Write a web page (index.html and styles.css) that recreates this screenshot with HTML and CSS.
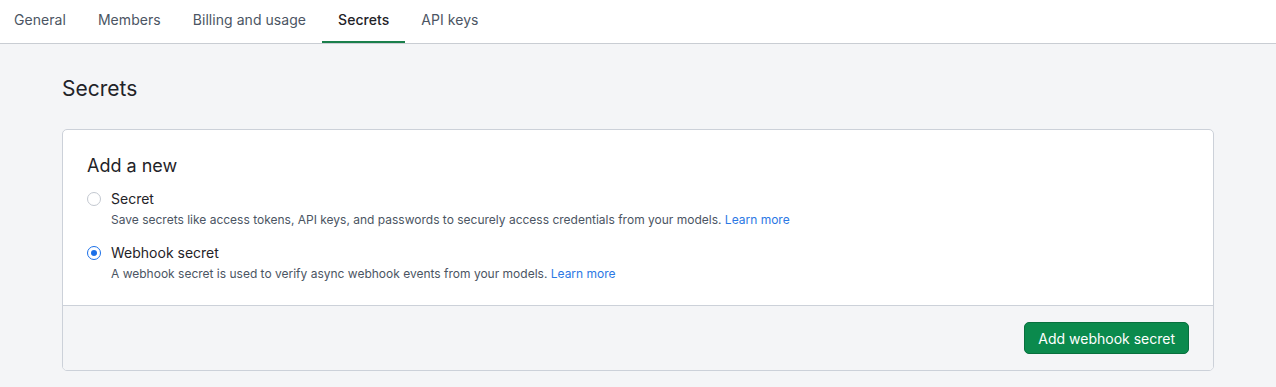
FILE: index.html
```html
<!DOCTYPE html>
<html lang="en">
<head>
<meta charset="utf-8">
<link rel="stylesheet" href="styles.css">
</head>
<body>
<nav class="tabs">
  <a class="tab first">General</a>
  <a class="tab">Members</a>
  <a class="tab">Billing and usage</a>
  <a class="tab active">Secrets</a>
  <a class="tab">API keys</a>
</nav>
<main class="page">
  <h1 class="title">Secrets</h1>
  <section class="card">
    <div class="card-body">
      <h2 class="card-title">Add a new</h2>
      <div class="option">
        <span class="radio"></span>
        <div class="option-text">
          <div class="option-label">Secret</div>
          <div class="option-desc">Save secrets like access tokens, API keys, and passwords to securely access credentials from your models. <a class="link">Learn more</a></div>
        </div>
      </div>
      <div class="option">
        <span class="radio checked"></span>
        <div class="option-text">
          <div class="option-label">Webhook secret</div>
          <div class="option-desc">A webhook secret is used to verify async webhook events from your models. <a class="link">Learn more</a></div>
        </div>
      </div>
    </div>
    <div class="card-footer">
      <button class="btn">Add webhook secret</button>
    </div>
  </section>
</main>
</body>
</html>
```

FILE: styles.css
```css
* { box-sizing: border-box; }
html, body { margin: 0; padding: 0; }
body {
  font-family: Inter, "Noto Sans", sans-serif;
  background: #f4f5f7;
  color: #1f2328;
  height: 387px;
  overflow: hidden;
}
.tabs {
  display: flex;
  background: #ffffff;
  border-bottom: 1px solid #c9cdd3;
  height: 44px;
}
.tab {
  display: flex;
  align-items: center;
  padding: 0 16px 2px;
  font-size: 14px;
  letter-spacing: 0.05px;
  color: #4b5563;
  height: 43px;
  border-bottom: 2px solid transparent;
}
.tab.first { padding-left: 14px; }
.tab.active {
  color: #1f2328;
  font-weight: 500;
  border-bottom-color: #1a7f4b;
}
.page {
  padding: 0 62px 0 62px;
}
.title {
  margin: 0;
  padding-top: 31px;
  font-size: 21px;
  font-weight: 400;
  line-height: 28px;
  color: #1f2328;
}
.card {
  margin-top: 26px;
  background: #ffffff;
  border: 1px solid #ccd1d9;
  border-radius: 5px;
  overflow: hidden;
}
.card-body {
  padding: 23px 24px 22px 24px;
}
.card-title {
  margin: 0 0 10px;
  font-size: 18px;
  font-weight: 400;
  line-height: 26px;
  color: #1f2328;
}
.option {
  display: flex;
  gap: 10px;
  margin-bottom: 14px;
}
.option:last-child { margin-bottom: 0; }
.radio {
  width: 14px;
  height: 14px;
  border-radius: 50%;
  border: 1px solid #c3c8d0;
  background: #fff;
  margin-top: 3px;
  flex: none;
  position: relative;
}
.radio.checked {
  border-color: #1a6fe8;
}
.radio.checked::after {
  content: "";
  position: absolute;
  left: 3px; top: 3px;
  width: 6px; height: 6px;
  border-radius: 50%;
  background: #1a6fe8;
}
.option-label {
  font-size: 14px;
  line-height: 20px;
  color: #1f2328;
}
.option-desc {
  margin-top: 1px;
  font-size: 12px;
  line-height: 19px;
  color: #4b5563;
}
.link { color: #2b78e4; }
.card-footer {
  display: flex;
  justify-content: flex-end;
  background: #f4f5f7;
  border-top: 1px solid #ccd1d9;
  padding: 16px 24px 16px 24px;
}
.btn {
  font-family: Inter, "Noto Sans", sans-serif;
  font-size: 14px;
  color: #ffffff;
  background: #0b8a4d;
  border: 1px solid #08703e;
  border-radius: 5px;
  height: 32px;
  padding: 0 13px;
  cursor: pointer;
}
```
